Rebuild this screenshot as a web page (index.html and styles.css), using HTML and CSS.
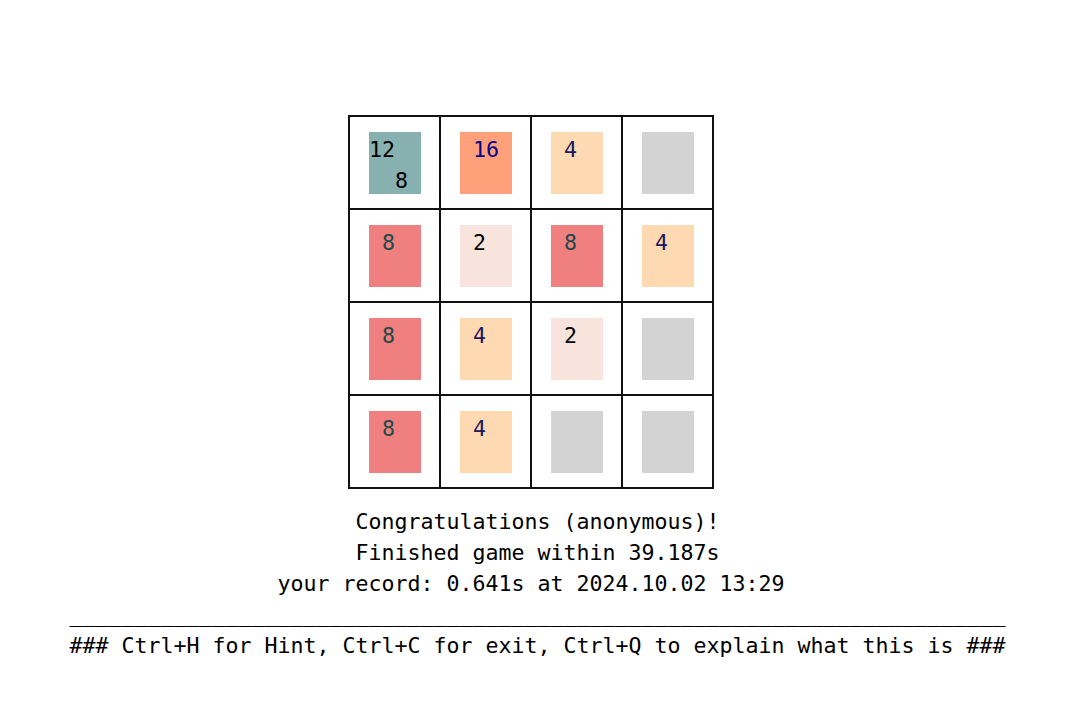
FILE: index.html
```html
<!DOCTYPE html>
<html lang="en">
<head>
    <meta charset="UTF-8">
    <meta name="viewport" content="width=device-width, initial-scale=1.0">
    <title>2048 - terminal</title>
    <link rel="stylesheet" href="styles.css">
</head>
<body>
    <main class="screen">
        <div class="board">
            <div class="cell"><div class="tile t128"><span class="row-a">12</span><span class="row-b">8</span></div></div>
            <div class="cell"><div class="tile t16">16</div></div>
            <div class="cell"><div class="tile t4">4</div></div>
            <div class="cell"><div class="tile empty"></div></div>

            <div class="cell"><div class="tile t8">8</div></div>
            <div class="cell"><div class="tile t2">2</div></div>
            <div class="cell"><div class="tile t8">8</div></div>
            <div class="cell"><div class="tile t4">4</div></div>

            <div class="cell"><div class="tile t8">8</div></div>
            <div class="cell"><div class="tile t4">4</div></div>
            <div class="cell"><div class="tile t2">2</div></div>
            <div class="cell"><div class="tile empty"></div></div>

            <div class="cell"><div class="tile t8">8</div></div>
            <div class="cell"><div class="tile t4">4</div></div>
            <div class="cell"><div class="tile empty"></div></div>
            <div class="cell"><div class="tile empty"></div></div>
        </div>

        <div class="message">
            <div class="line">Congratulations (anonymous)!</div>
            <div class="line">Finished game within 39.187s</div>
            <!-- odd length: trailing space keeps it on the terminal's char grid -->
            <div class="line">your record: 0.641s at 2024.10.02 13:29 </div>
            <div class="line rule">________________________________________________________________________</div>
            <div class="line">### Ctrl+H for Hint, Ctrl+C for exit, Ctrl+Q to explain what this is ###</div>
        </div>
    </main>
</body>
</html>
```

FILE: styles.css
```css
:root {
    --mono: 'DejaVu Sans Mono', 'Liberation Mono', monospace;
    --char: 13px;
    --tile-2: #f8e4dc;
    --tile-4: #ffd9b1;
    --tile-8: #f08080;
    --tile-16: #ffa07a;
    --tile-128: #87b1b1;
    --tile-empty: #d3d3d3;
}

body {
    margin: 0;
    background-color: #fff;
    color: #000;
    font-family: var(--mono);
    font-size: 21.6px;
    line-height: 31px;
}

.screen {
    width: 1075px;
    padding-top: 115px;
    display: flex;
    flex-direction: column;
    align-items: center;
}

.board {
    display: grid;
    grid-template-columns: repeat(4, 89px);
    grid-template-rows: repeat(4, 91px);
    gap: 2px;
    padding: 2px;
    background-color: #111;
    margin-right: 13px;
}

.cell {
    background-color: #fff;
    display: flex;
    align-items: center;
    justify-content: center;
}

.tile {
    width: 52px;
    height: 62px;
    box-sizing: border-box;
    padding: 2px 0 0 var(--char);
    margin: 1px 0 0 1px;
}

.t2 { background-color: var(--tile-2); color: #000; }
.t4 { background-color: var(--tile-4); color: #191960; }
.t8 { background-color: var(--tile-8); color: #1f4a4a; }
.t16 { background-color: var(--tile-16); color: #00008b; }
.t128 { background-color: var(--tile-128); color: #000; padding-left: 0; }
.empty { background-color: var(--tile-empty); }

.t128 span {
    display: block;
}

.t128 .row-b {
    padding-left: calc(2 * var(--char));
}

.message {
    margin-top: 17px;
    text-align: center;
}

.line {
    white-space: pre;
}
```
